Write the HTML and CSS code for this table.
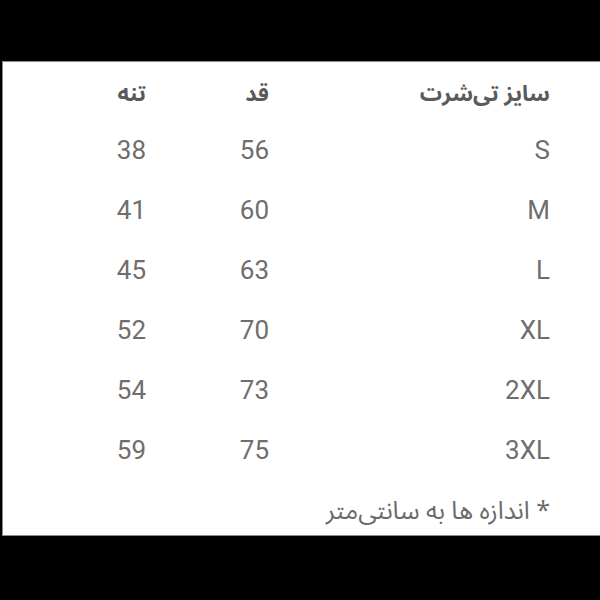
FILE: index.html
```html
<!DOCTYPE html>
<html lang="fa" dir="rtl">
<head>
<meta charset="utf-8">
<link rel="stylesheet" href="styles.css">
</head>
<body>
<div class="panel">
  <div class="table">
    <div class="row head">
      <div class="c1">سایز تی‌شرت</div>
      <div class="c2">قد</div>
      <div class="c3">تنه</div>
    </div>
    <div class="row"><div class="c1 num">S</div><div class="c2 num">56</div><div class="c3 num">38</div></div>
    <div class="row"><div class="c1 num">M</div><div class="c2 num">60</div><div class="c3 num">41</div></div>
    <div class="row"><div class="c1 num">L</div><div class="c2 num">63</div><div class="c3 num">45</div></div>
    <div class="row"><div class="c1 num">XL</div><div class="c2 num">70</div><div class="c3 num">52</div></div>
    <div class="row"><div class="c1 num">2XL</div><div class="c2 num">73</div><div class="c3 num">54</div></div>
    <div class="row"><div class="c1 num">3XL</div><div class="c2 num">75</div><div class="c3 num">59</div></div>
  </div>
  <div class="note">* اندازه ها به سانتی‌متر</div>
</div>
</body>
</html>
```
FILE: styles.css
```css
html, body {
  margin: 0;
  padding: 0;
  background: #000;
  width: 600px;
  height: 600px;
  overflow: hidden;
}
.panel {
  margin-top: 61px;
  margin-left: 2px;
  height: 475px;
  background: #fff;
  border-top: 1px solid #8a8a8a;
  border-left: 1px solid #8a8a8a;
  border-bottom: 1px solid #8a8a8a;
  box-sizing: border-box;
  padding-right: 50px;
  color: #6c6c6c;
}
.table {
  display: flex;
  flex-direction: column;
}
.row {
  display: grid;
  grid-template-columns: 281px 123px 1fr;
  height: 60px;
  align-items: center;
  text-align: right;
}
.row.head {
  height: 58px;
  padding-top: 5px;
  box-sizing: border-box;
  font-family: "Noto Sans Arabic", "Noto Naskh Arabic", "DejaVu Sans", sans-serif;
  font-weight: bold;
  font-size: 22px;
  color: #5a5a5a;
}
.num {
  font-family: Roboto, "Liberation Sans", sans-serif;
  font-size: 26px;
  color: #6e6e6e;
}
.note {
  height: 56px;
  padding-top: 6px;
  box-sizing: border-box;
  display: flex;
  align-items: center;
  font-family: "Noto Sans Arabic", "Noto Naskh Arabic", "DejaVu Sans", sans-serif;
  font-size: 25px;
  color: #6a6a6a;
}
```
